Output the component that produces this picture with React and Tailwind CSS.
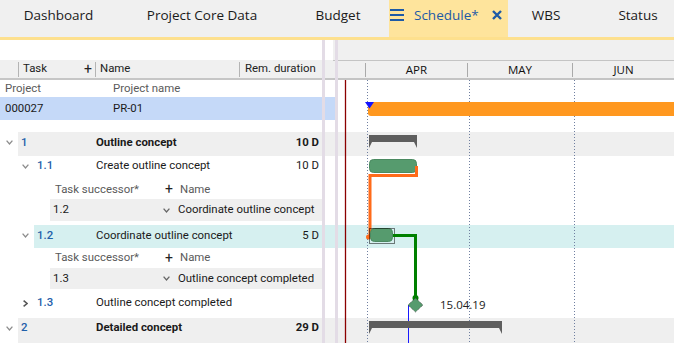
import React from "react";

const tabs = [
  { label: "Dashboard", w: "w-[117px]" },
  { label: "Project Core Data", w: "w-[170px]" },
  { label: "Budget", w: "w-[102px]" },
  { label: "Schedule*", w: "w-[119px]", active: true },
  { label: "WBS", w: "w-[76px]" },
  { label: "Status", w: "w-[108px]" },
];

const ChevronDown = ({ className = "" }) => (
  <svg width="7" height="5" viewBox="0 0 7 5" className={className}>
    <polyline points="0.6,0.6 3.5,4 6.4,0.6" fill="none" stroke="currentColor" strokeWidth="1.3" />
  </svg>
);

const ChevronRight = ({ className = "" }) => (
  <svg width="5" height="7" viewBox="0 0 5 7" className={className}>
    <polyline points="0.6,0.6 4,3.5 0.6,6.4" fill="none" stroke="currentColor" strokeWidth="1.5" />
  </svg>
);

const TaskRow = ({ h, level, num, name, dur, bold, bg = "", ganttBg = "", pb = "", collapsed }) => (
  <div className={`flex ${h}`}>
    <div className="w-[335px] flex">
      <div className={level === 0 ? "w-0" : "w-[16px]"} />
      <div className={`w-[18px] flex items-center justify-center ${pb} ${collapsed ? "text-[#555]" : "text-[#8c8c8c]"}`}>
        {collapsed ? <ChevronRight /> : <ChevronDown />}
      </div>
      <div className={`flex-1 flex items-center pl-[3px] pr-[16px] ${bg} ${pb}`}>
        <span className={`${level === 0 ? "w-[75px]" : "w-[59px]"} text-[#1f60aa] font-medium`}>{num}</span>
        <span className={`flex-1 ${bold ? "font-bold" : ""}`}>{name}</span>
        <span className={bold ? "font-bold" : ""}>{dur}</span>
      </div>
    </div>
    <div className={`flex-1 ${ganttBg}`} />
  </div>
);

const SuccessorHeader = ({ h }) => (
  <div className={`flex items-center ${h} text-[#5a5a5a]`}>
    <span className="ml-[55px] w-[110px]">Task successor*</span>
    <span className="w-[15px] text-[14px] text-[#222]">+</span>
    <span>Name</span>
  </div>
);

const SuccessorRow = ({ h, num, name }) => (
  <div className={`flex ${h}`}>
    <div className="w-[50px]" />
    <div className="w-[272px] bg-[#efefef] flex items-center pl-[3px]">
      <span className="w-[110px]">{num}</span>
      <span className="w-[15px] flex items-center text-[#666]">
        <ChevronDown />
      </span>
      <span>{name}</span>
    </div>
  </div>
);

const App = () => {
  return (
    <div className="w-[674px] h-[343px] overflow-hidden bg-white font-['Roboto',sans-serif] text-[11.4px] text-[#1a1a1a]">
      {/* Tab bar */}
      <div className="flex h-[40px] bg-[#f0f0f0] border-b-[3px] border-[#fde08e] overflow-hidden font-['Open_Sans',sans-serif] text-[13.5px] text-[#1a1a1a] whitespace-nowrap">
        {tabs.map((t) =>
          t.active ? (
            <div key={t.label} className={`${t.w} shrink-0 h-full bg-[#fee49c] flex items-center pl-[1px] pb-[7px] text-[#1d5aa6]`}>
              <svg width="14" height="12" viewBox="0 0 14 12">
                <rect x="0" y="0" width="14" height="2" fill="#1d5aa6" />
                <rect x="0" y="5" width="14" height="2" fill="#1d5aa6" />
                <rect x="0" y="10" width="14" height="2" fill="#1d5aa6" />
              </svg>
              <span className="ml-[10px]">{t.label}</span>
              <svg width="10" height="10" viewBox="0 0 10 10" className="ml-[13px]">
                <path d="M1 1 L9 9 M9 1 L1 9" stroke="#1d5aa6" strokeWidth="2.4" />
              </svg>
            </div>
          ) : (
            <div key={t.label} className={`${t.w} shrink-0 h-full flex items-center justify-center pb-[7px]`}>
              {t.label}
            </div>
          )
        )}
      </div>

      {/* Body */}
      <div className="relative h-[303px]">
        {/* header rows */}
        <div className="flex h-[40px]">
          <div className="w-[335px] flex flex-col">
            <div className="h-[20px]" />
            <div className="h-[20px] bg-[#f0f0f0] border-b-2 border-[#c6c6c6] flex items-center text-[#222]">
              <div className="w-[18px]" />
              <div className="w-px h-[15px] bg-[#b4b4b4]" />
              <span className="ml-[4px] w-[61px]">Task</span>
              <span className="w-[11px] text-[14px]">+</span>
              <div className="w-px h-[15px] bg-[#b4b4b4]" />
              <span className="ml-[4px] w-[139px]">Name</span>
              <div className="w-px h-[15px] bg-[#b4b4b4]" />
              <span className="ml-[5px]">Rem. duration</span>
            </div>
          </div>
          <div className="flex-1 flex flex-col bg-[#f0f0f0]">
            <div className="h-[21px] border-b border-[#c4c4c4]" />
            <div className="h-[19px] border-b-2 border-[#c4c4c4] flex items-center font-['Open_Sans',sans-serif] text-[11.5px] text-[#111]">
              <div className="w-[32px]" />
              <div className="w-px h-[14px] bg-[#aaaaaa]" />
              <div className="w-[101px] text-center">APR</div>
              <div className="w-px h-[14px] bg-[#aaaaaa]" />
              <div className="w-[104px] text-center">MAY</div>
              <div className="w-px h-[14px] bg-[#aaaaaa]" />
              <div className="w-[101px] text-center">JUN</div>
            </div>
          </div>
        </div>

        {/* Project header */}
        <div className="flex h-[17px] items-center text-[#5a5a5a]">
          <span className="ml-[5px] w-[108px]">Project</span>
          <span>Project name</span>
        </div>
        <div className="flex h-[23px]">
          <div className="w-[335px] bg-[#c5d9f8] flex items-center">
            <span className="ml-[5px] w-[108px]">000027</span>
            <span>PR-01</span>
          </div>
          <div className="flex-1" />
        </div>
        <div className="h-[12px]" />

        <TaskRow h="h-[24px]" level={0} num="1" name="Outline concept" dur="10 D" bold bg="bg-[#efefef]" ganttBg="bg-[#efefef]" pb="pb-[3px]" />
        <TaskRow h="h-[24px]" level={1} num="1.1" name="Create outline concept" dur="10 D" pb="pb-[4px]" />
        <SuccessorHeader h="h-[19px]" />
        <SuccessorRow h="h-[22px]" num="1.2" name="Coordinate outline concept" />
        <div className="h-[4px]" />
        <TaskRow h="h-[23px]" level={1} num="1.2" name="Coordinate outline concept" dur="5 D" bg="bg-[#d6f0f0]" ganttBg="bg-[#d6f0f0]" pb="pb-[2px]" />
        <SuccessorHeader h="h-[20px]" />
        <SuccessorRow h="h-[21px]" num="1.3" name="Outline concept completed" />
        <div className="h-[2px]" />
        <TaskRow h="h-[27px]" level={1} num="1.3" name="Outline concept completed" dur="" collapsed pb="pb-[3px]" />
        <TaskRow h="h-[25px]" level={0} num="2" name="Detailed concept" dur="29 D" bold bg="bg-[#efefef]" ganttBg="bg-[#efefef]" pb="pb-[5px]" />

        {/* splitter bars */}
        <div className="absolute left-[322px] top-0 w-[3px] h-full bg-[#e3dce6]" />
        <div className="absolute left-[335px] top-0 w-[3px] h-full bg-[#e3dce6]" />

        {/* gantt drawing */}
        <svg className="absolute left-0 top-0 pointer-events-none" width="674" height="303" viewBox="0 40 674 303">
          <line x1="367.5" y1="80" x2="367.5" y2="343" stroke="#6f7fa0" strokeDasharray="1 2" />
          <line x1="469.5" y1="80" x2="469.5" y2="343" stroke="#6f7fa0" strokeDasharray="1 2" />
          <line x1="574.5" y1="80" x2="574.5" y2="343" stroke="#6f7fa0" strokeDasharray="1 2" />
          <line x1="345.5" y1="80" x2="345.5" y2="343" stroke="#8b0000" strokeWidth="1.3" />

          <rect x="368" y="102" width="320" height="14" rx="3" fill="#ff981f" />
          <polygon points="365,102 374,102 369.5,108.5" fill="#1414ff" />

          <path d="M369 135 H417 V148 L414 142 H372 L369 148 Z" fill="#5e5e5e" />

          <rect x="369.5" y="159.5" width="47" height="13" rx="4" fill="#569b6e" stroke="#4b8a61" />
          <path d="M416.5 166 V175.5 H370 V237" fill="none" stroke="#ff6b1a" strokeWidth="3" />
          <circle cx="368.5" cy="237" r="2.5" fill="#ff6b1a" />

          <rect x="370.5" y="228.5" width="22" height="13" rx="4" fill="#569b6e" stroke="#4b8a61" />
          <rect x="369.5" y="228.5" width="25" height="15" fill="none" stroke="#000" strokeDasharray="1 1" />
          <path d="M393 235.5 H415.5 V298" fill="none" stroke="#008000" strokeWidth="3" />
          <circle cx="415.5" cy="298" r="3" fill="#008000" />

          <line x1="408.5" y1="305" x2="408.5" y2="343" stroke="#1a1aff" />
          <polygon points="415.5,298 423,305 415.5,312 408,305" fill="#569b6e" stroke="#333" strokeWidth="0.7" strokeDasharray="1 1" />
          <text x="440" y="309" fontFamily="'Open Sans', sans-serif" fontSize="11.5" fill="#222">15.04.19</text>

          <path d="M369 321 H502 V334 L499 328 H372 L369 334 Z" fill="#5e5e5e" />
        </svg>
      </div>
    </div>
  );
};

export default App;
